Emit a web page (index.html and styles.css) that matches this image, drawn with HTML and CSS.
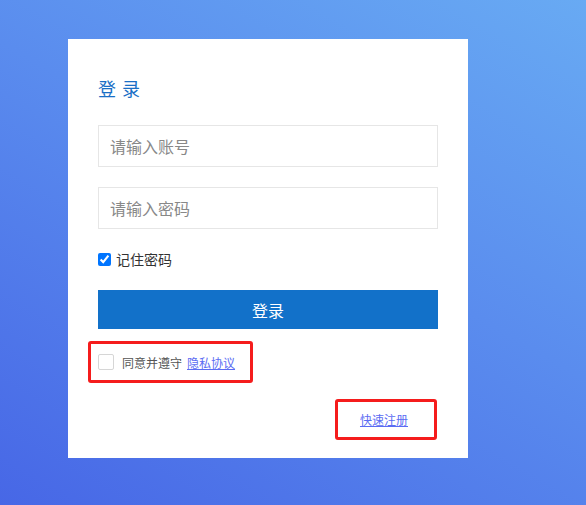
FILE: index.html
```html
<!DOCTYPE html>
<html lang="zh-CN">

<head>
  <meta charset="UTF-8">
  <meta name="viewport" content="width=device-width, initial-scale=1.0">
  <title>登录</title>
  <link rel="stylesheet" href="styles.css">
</head>

<body>

  <div class="login-box">
    <h2 class="title">登 录</h2>

    <input type="text" class="field" placeholder="请输入账号">
    <input type="password" class="field" placeholder="请输入密码">

    <label class="remember">
      <input type="checkbox" checked> 记住密码
    </label>

    <button type="submit" class="btn-login">登录</button>

    <div class="agree">
      <input type="checkbox" class="agree-check">
      <span>同意并遵守</span>
      <a href="#">隐私协议</a>
    </div>

    <div class="register">
      <a href="#">快速注册</a>
    </div>
  </div>

</body>

</html>
```

FILE: styles.css
```css
* {
  font-family: 'Microsoft YaHei', 'Noto Sans CJK SC', sans-serif;
  box-sizing: border-box;
}

html,
body {
  height: 100%;
}

body {
  margin: 0;
  padding: 39px 0 0 68px;
  background: linear-gradient(30deg, #4767e6 0%, #5a8cee 55%, #68aaf3 100%);
}

.login-box {
  width: 400px;
  height: 419px;
  background-color: #fff;
  padding: 37px 30px 0 30px;
  display: flex;
  flex-direction: column;
}

.title {
  margin: 0;
  font-size: 18px;
  line-height: 24px;
  font-weight: normal;
  letter-spacing: 1px;
  color: #1a6fc6;
}

.field {
  width: 340px;
  height: 42px;
  border: 1px solid #e6e6e6;
  padding: 0 11px;
  font-size: 16px;
  color: #333;
  outline: none;
}

.field::placeholder {
  color: #888;
}

.title + .field {
  margin-top: 25px;
}

.field + .field {
  margin-top: 20px;
}

.remember {
  display: flex;
  align-items: center;
  margin-top: 20px;
  height: 20px;
  font-size: 14px;
  color: #333;
}

.remember input {
  width: 13px;
  height: 13px;
  margin: 0 5px 0 0;
}

.btn-login {
  margin-top: 21px;
  height: 39px;
  border: none;
  background-color: #1271c9;
  color: #fff;
  font-size: 16px;
  cursor: pointer;
}

.agree {
  margin: 12px 0 0 -10px;
  width: 165px;
  height: 42px;
  border: 3px solid #f51c1c;
  border-radius: 3px;
  display: flex;
  align-items: center;
  padding-left: 7px;
  font-size: 12px;
  color: #555;
}

.agree-check {
  appearance: none;
  width: 16px;
  height: 16px;
  margin: 0 8px 0 0;
  border: 1px solid #d6d6d6;
  border-radius: 2px;
  background-color: #fff;
}

.agree a {
  margin-left: 5px;
  color: #5b6cf3;
}

.register {
  margin: 16px 1px 0 auto;
  width: 102px;
  height: 41px;
  border: 3px solid #f51c1c;
  border-radius: 3px;
  display: flex;
  align-items: center;
  justify-content: center;
  padding-right: 4px;
}

.register a {
  font-size: 12px;
  color: #5b6cf3;
}
```
